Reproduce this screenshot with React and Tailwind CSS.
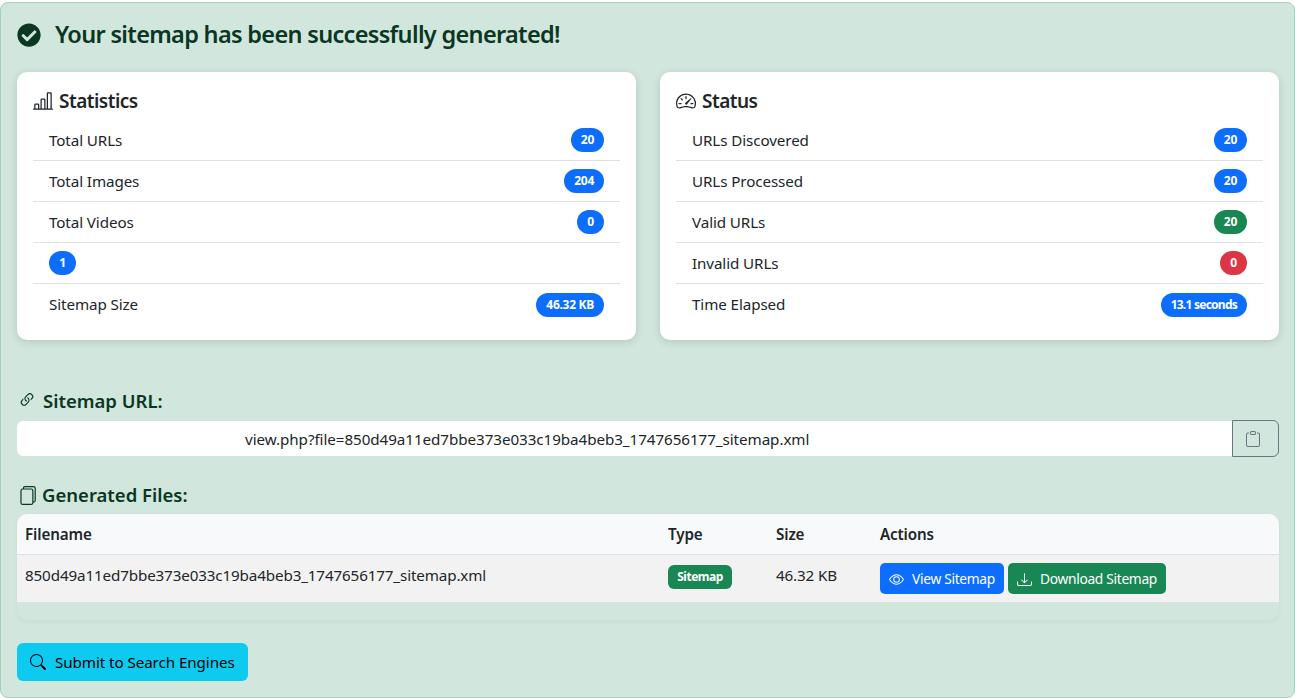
import React from "react";
import { BsBarChartLine, BsSpeedometer2, BsLink45Deg, BsFiles, BsClipboard, BsEye, BsDownload, BsSearch } from "react-icons/bs";
import { FaCheckCircle } from "react-icons/fa";

const font = "font-['Noto_Sans','Open_Sans',sans-serif]";

function Badge({ children, color = "bg-[#0d6efd]", tight }) {
  return (
    <span className={`${color} rounded-full ${tight ? "tracking-[-0.75px]" : "tracking-[-0.28px]"} px-[10px] h-[24px] min-w-[27px] inline-flex items-center justify-center text-[12px] font-bold text-white`}>
      {children}
    </span>
  );
}

function Row({ label, value, color, last, tight }) {
  return (
    <div className={`h-[41px] px-4 flex items-center justify-between text-[15.2px] text-[#212529] tracking-[-0.1px] ${last ? "" : "border-b border-[#dee2e6]"}`}>
      {label ? <span>{label}</span> : null}
      <Badge color={color} tight={tight}>{value}</Badge>
    </div>
  );
}

function Card({ icon, title, rows }) {
  return (
    <div className="flex-1 bg-white rounded-[10px] shadow-[0_2px_8px_rgba(0,0,0,0.15)] px-4 pt-[16px] h-[268px]">
      <h5 className="flex items-center gap-[6px] h-[26px] text-[19px] font-semibold text-[#212529] tracking-[-0.5px] mb-[6px]">
        {icon}
        {title}
      </h5>
      {rows.map((r, i) => (
        <Row key={i} {...r} last={i === rows.length - 1} />
      ))}
    </div>
  );
}

export default function App() {
  return (
    <div className={`${font} w-[1295px] h-[698px] overflow-hidden bg-white pt-[2px]`}>
      <div className="h-[696px] bg-[#d1e7dd] border border-[#a3cfbb] rounded-[8px] pl-4 pr-[15px] pt-[16px] text-[#0a3622]">
        <h4 className="flex items-center gap-[14px] h-[32px] text-[23.5px] font-semibold tracking-[-0.68px]">
          <FaCheckCircle className="w-[24px] h-[24px]" />
          Your sitemap has been successfully generated!
        </h4>
        <div className="flex gap-6 mt-[21px]">
          <Card
            icon={<BsBarChartLine className="w-[20px] h-[20px]" />}
            title="Statistics"
            rows={[
              { label: "Total URLs", value: "20" },
              { label: "Total Images", value: "204" },
              { label: "Total Videos", value: "0" },
              { label: "", value: "1" },
              { label: "Sitemap Size", value: "46.32 KB" },
            ]}
          />
          <Card
            icon={<BsSpeedometer2 className="w-[20px] h-[20px]" />}
            title="Status"
            rows={[
              { label: "URLs Discovered", value: "20" },
              { label: "URLs Processed", value: "20" },
              { label: "Valid URLs", value: "20", color: "bg-[#198754]" },
              { label: "Invalid URLs", value: "0", color: "bg-[#dc3545]" },
              { label: "Time Elapsed", value: "13.1 seconds", tight: true },
            ]}
          />
        </div>
        <h5 className="flex items-center gap-[7px] mt-[48px] h-[26px] text-[18.5px] font-semibold tracking-[0px] pl-[1px]">
          <BsLink45Deg className="w-[18px] h-[18px] text-[#0a3622] -mt-[3px]" />
          Sitemap URL:
        </h5>
        <div className="flex mt-[6px] h-[37px]">
          <div className="flex-1 my-[1px] pt-[1px] bg-white rounded-l-[6px] flex items-center pl-[228px] text-[15.2px] text-[#212529] tracking-[-0.06px]">
            view.php?file=850d49a11ed7bbe373e033c19ba4beb3_1747656177_sitemap.xml
          </div>
          <div className="w-[47px] border border-[#6c757d] rounded-r-[6px] flex items-center justify-center pr-[5px] text-[#6c757d]">
            <BsClipboard className="w-[16px] h-[16px]" />
          </div>
        </div>
        <h5 className="flex items-center gap-[5px] mt-[25px] h-[26px] text-[18.5px] font-semibold tracking-[0px] pl-[1px]">
          <BsFiles className="w-[19px] h-[19px]" />
          Generated Files:
        </h5>
        <div className="mt-[6px] h-[106px] rounded-[10px] overflow-hidden shadow-[0_1px_4px_rgba(0,0,0,0.05)] text-[#212529] text-[15.2px] tracking-[-0.13px]">
          <div className="h-[41px] bg-[#f8f9fa] border-b border-[#dee2e6] flex items-center font-semibold">
            <span className="pl-2 w-[651px]">Filename</span>
            <span className="w-[108px]">Type</span>
            <span className="w-[104px]">Size</span>
            <span>Actions</span>
          </div>
          <div className="h-[47px] bg-[#f2f2f2] flex items-start">
            <span className="pl-2 w-[651px] mt-[9px]">850d49a11ed7bbe373e033c19ba4beb3_1747656177_sitemap.xml</span>
            <span className="w-[108px] mt-[9px]">
              <span className="inline-flex items-center justify-center h-[24px] w-[64px] rounded-[6px] bg-[#198754] text-white text-[12px] font-bold tracking-[-0.5px]">Sitemap</span>
            </span>
            <span className="w-[104px] mt-[9px]">46.32 KB</span>
            <span className="flex gap-1 mt-[8px]">
              <span className="inline-flex items-center gap-[8px] h-[31px] w-[124px] pt-[1px] justify-center rounded-[5px] bg-[#0d6efd] text-white text-[13.8px] tracking-[-0.33px]">
                <BsEye className="w-[15px] h-[15px]" /> View Sitemap
              </span>
              <span className="inline-flex items-center gap-[8px] h-[31px] w-[158px] pt-[1px] justify-center rounded-[5px] bg-[#198754] text-white text-[13.8px] tracking-[-0.33px]">
                <BsDownload className="w-[15px] h-[15px]" /> Download Sitemap
              </span>
            </span>
          </div>
        </div>
        <div className="mt-[23px] inline-flex items-center gap-[9px] h-[38px] w-[231px] pl-[13px] rounded-[6px] bg-[#0dcaf0] text-black text-[15.2px] tracking-[-0.08px]">
          <BsSearch className="w-[16px] h-[16px]" />
          Submit to Search Engines
        </div>
      </div>
    </div>
  );
}
